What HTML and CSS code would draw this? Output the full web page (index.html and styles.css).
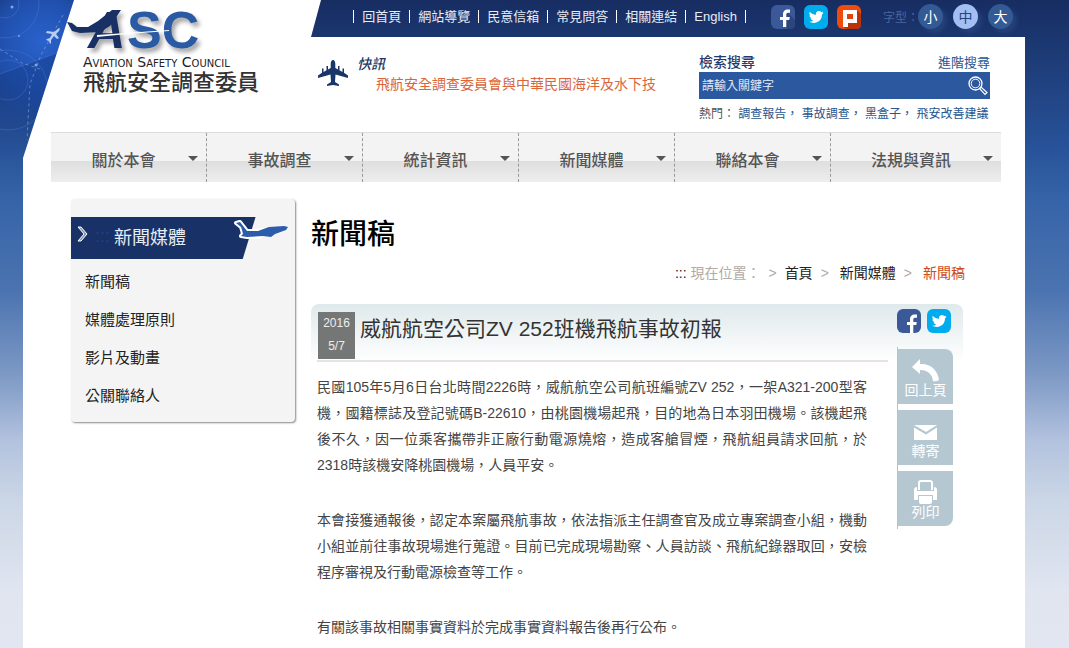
FILE: index.html
```html
<!DOCTYPE html>
<html lang="zh-Hant">
<head>
<meta charset="utf-8">
<meta name="viewport" content="width=device-width, initial-scale=1">
<title>飛航安全調查委員會 - 新聞稿</title>
<link rel="stylesheet" href="styles.css">
</head>
<body>
<svg class="radar" viewBox="0 0 74 160" aria-hidden="true">
  <defs>
    <radialGradient id="glow" gradientUnits="userSpaceOnUse" cx="42" cy="42" r="95">
      <stop offset="0" stop-color="#2a62cc"/><stop offset=".45" stop-color="#2050ae"/><stop offset="1" stop-color="#1d4695" stop-opacity="0"/>
    </radialGradient>
    <linearGradient id="shade" x1="0" y1="0" x2="0" y2="1">
      <stop offset="0" stop-color="#123a86" stop-opacity=".5"/><stop offset="1" stop-color="#123a86" stop-opacity="0"/>
    </linearGradient>
  </defs>
  <path d="M0 0H74L23 160H0z" fill="url(#glow)"/>
  <path d="M0 74 57 53 23 160H0z" fill="url(#shade)"/>
  <g fill="none" stroke="#5b8be0" stroke-width="1" opacity=".3">
    <circle cx="5" cy="4" r="34"/><circle cx="5" cy="4" r="14"/><circle cx="8" cy="90" r="40"/><circle cx="8" cy="80" r="20"/>
    <path d="M0 74 57 53"/>
  </g>
  <path d="M0 49 22 63 40 69M63 15 41 55 30 84 27 140" fill="none" stroke="#a9c4f2" stroke-width="1" stroke-dasharray="3 3" opacity=".45"/>
  <g fill="#7fa4e8"><circle cx="12" cy="7" r="1.5"/><circle cx="19" cy="36" r="1"/><circle cx="36" cy="65" r="1.5"/></g>
  <path d="M59 28c1 0 1 1 0 3l-3 3 3 4-2 1-3-3-3 4v3l-1 1-1-3-3-1 1-1 3-1 2-4-6-1 1-2 7 1z" fill="#b9cdf0"/>
</svg>
<div class="page">
  <header class="header">
    <div class="topbar">
      <nav class="utility" aria-label="網站工具">
        <a href="#">回首頁</a><a href="#">網站導覽</a><a href="#">民意信箱</a><a href="#">常見問答</a><a href="#">相關連結</a><a href="#">English</a>
      </nav>
      <div class="social">
        <a href="#" aria-label="Facebook"><svg class="badge" viewBox="0 0 24 24"><rect width="24" height="24" rx="6" fill="#3b5998"/><path d="M16 7 24 15V20Q24 24 20 24H17L13 20z" fill="#2c467e"/><path d="M12 22v-7H9v-3h3v-2.500C12 6 14 4.500 16.500 4.500H19v3.200h-1.800c-1.500 0-1.900.7-1.900 2V12h3.500l-.5 3h-3v7z" fill="#fff"/></svg></a>
        <a href="#" aria-label="Twitter"><svg class="badge" viewBox="0 0 24 24"><rect width="24" height="24" rx="6" fill="#00aced"/><path d="M19.500 7.500c-.6.3-1.100.4-1.700.5.600-.4 1-.9 1.300-1.600-.6.300-1.200.6-1.900.7a3 3 0 0 0-5.200 2.700C9.500 9.700 7.300 8.500 5.800 6.700c-.8 1.400-.4 3.100.9 4-.5 0-.9-.1-1.300-.4 0 1.500 1 2.700 2.400 3-.5.1-.9.1-1.300 0 .4 1.200 1.500 2 2.800 2.100-1.300 1-2.800 1.400-4.400 1.200 5.800 3.500 13.100.1 13.100-7 .6-.6 1.100-1.200 1.500-2.100z" fill="#fff"/></svg></a>
        <a href="#" aria-label="Plurk"><svg class="badge" viewBox="0 0 24 24"><rect width="24" height="24" rx="6" fill="#f04a0c"/><path d="M20 5 24 9V20Q24 24 20 24H10L6 22z" fill="#b93509"/><path d="M6 5H20V18H11V22H6z" fill="#fff"/><path d="M10 9H16V14H10z" fill="#e0440c"/></svg></a>
      </div>
      <div class="sizes" role="group" aria-label="字型">
        <span class="sizes-label">字型：</span>
        <button type="button" class="size">小</button>
        <button type="button" class="size size-on">中</button>
        <button type="button" class="size">大</button>
      </div>
    </div>
    <div class="masthead">
      <a class="brand" href="#">
        <svg class="logo" viewBox="0 0 150 51" role="img" aria-label="ASC">
          <path d="M2 18 7 19 12 23 23 23 33 17 47 6 56 6 45 22 35 28 15 29 7 27z" fill="#183064"/>
          <text x="23" y="44" class="logo-a">A</text>
          <text x="62" y="44" class="logo-sc">SC</text>
          <path d="M32 31 104 26 104 27 62 30 32 33z" fill="#fff"/>
        </svg>
        <span class="brand-en">Aviation Safety Council</span>
        <span class="brand-zh">飛航安全調查委員</span>
      </a>
      <section class="flash">
        <svg class="flash-plane" viewBox="0 0 30 26" aria-hidden="true"><path d="M15 0c1.500 0 2.300 2 2.300 4v4l2.700 1.500V6h1.500v4.300l3 1.600V8.500H26v4.300l4 2.700V18l-12.500-3.500L17 22l4 2.500V26l-6-1-6 1v-1.500L13 22l-.5-7.500L0 18v-2.500l4-2.700V8.500h1.500v3.400l3-1.600V6H10v3.500L12.700 8V4c0-2 .8-4 2.300-4z" fill="#1a3568"/></svg>
        <div>
          <h2 class="flash-title">快訊</h2>
          <a class="flash-link" href="#">飛航安全調查委員會與中華民國海洋及水下技</a>
        </div>
      </section>
      <form class="search">
        <div class="search-head"><label for="q">檢索搜尋</label><a href="#">進階搜尋</a></div>
        <div class="search-box">
          <input id="q" type="text" placeholder="請輸入關鍵字">
          <button type="button" aria-label="搜尋"><svg viewBox="0 0 20 20"><g fill="none" stroke="#fff"><circle cx="7.500" cy="7.500" r="6.500" stroke-width="1.300"/><circle cx="7.500" cy="7.500" r="4.300"/><path d="m11.500 12.500 1.500-1.500 6 5.500-2 2z" stroke-width="1.200"/></g></svg></button>
        </div>
        <p class="hot">熱門： <a href="#">調查報告，</a> <a href="#">事故調查，</a> <a href="#">黑盒子，</a> <a href="#">飛安改善建議</a></p>
      </form>
    </div>
  </header>
  <nav class="menu" aria-label="主選單">
    <a href="#"><span>關於本會</span></a>
    <a href="#"><span>事故調查</span></a>
    <a href="#"><span>統計資訊</span></a>
    <a href="#"><span>新聞媒體</span></a>
    <a href="#"><span>聯絡本會</span></a>
    <a href="#"><span>法規與資訊</span></a>
  </nav>
  <div class="content">
    <aside class="sidebar">
      <h2 class="side-title">
        <svg class="side-arrow" viewBox="0 0 12 18" aria-hidden="true"><path d="m1 2 3 0 6 7-6 7H1l6-7z" fill="#8997b5" stroke="#fff"/></svg>
        <span class="side-dots">:::</span>
        <span>新聞媒體</span>
        <svg class="side-plane" viewBox="0 0 56 24" aria-hidden="true"><path d="M3 4 7 3 14 12 25 12 30 11 26 18 14 18 8 17 10 15 9 11 8 8z" fill="#fff" stroke="#fff" stroke-width="4" stroke-linejoin="round"/><path d="M3 4 7 3 14 12 25 12 36 8 51 7 55 8 53 11 42 15 38 18 30 17 14 18 8 17 10 15 9 11 8 8z" fill="#2c5caa"/></svg>
      </h2>
      <ul class="side-list">
        <li><a href="#">新聞稿</a></li>
        <li><a href="#">媒體處理原則</a></li>
        <li><a href="#">影片及動畫</a></li>
        <li><a href="#">公關聯絡人</a></li>
      </ul>
    </aside>
    <main class="main">
      <h1>新聞稿</h1>
      <nav class="crumbs" aria-label="現在位置">
        <span><b>:::</b> 現在位置：</span><i>&gt;</i><a href="#">首頁</a><i>&gt;</i><a class="crumb-gap" href="#">新聞媒體</a><i>&gt;</i><a class="crumb-gap crumb-on" href="#">新聞稿</a>
      </nav>
      <div class="panel">
        <article class="article">
          <header class="article-head">
            <time datetime="2016-05-07"><span>2016</span><span>5/7</span></time>
            <h2>威航航空公司ZV 252班機飛航事故初報</h2>
          </header>
          <div class="article-body">
            <p>民國105年5月6日台北時間2226時，威航航空公司航班編號ZV 252，一架A321-200型客機，國籍標誌及登記號碼B-22610，由桃園機場起飛，目的地為日本羽田機場。該機起飛後不久，因一位乘客攜帶非正廠行動電源燒熔，造成客艙冒煙，飛航組員請求回航，於2318時該機安降桃園機場，人員平安。</p>
            <p>本會接獲通報後，認定本案屬飛航事故，依法指派主任調查官及成立專案調查小組，機動小組並前往事故現場進行蒐證。目前已完成現場勘察、人員訪談、飛航紀錄器取回，安檢程序審視及行動電源檢查等工作。</p>
            <p>有關該事故相關事實資料於完成事實資料報告後再行公布。</p>
          </div>
        </article>
        <aside class="tools">
          <div class="share">
            <a href="#" aria-label="分享至 Facebook"><svg class="badge" viewBox="0 0 24 24"><rect width="24" height="24" rx="6" fill="#3b5998"/><path d="M13 24v-8h-3v-3h3v-2.500C13 7 15 5.500 17.500 5.500H20v3.200h-1.800c-1.500 0-1.900.7-1.900 2V13h3.500l-.5 3h-3v8z" fill="#fff"/></svg></a>
            <a href="#" aria-label="分享至 Twitter"><svg class="badge" viewBox="0 0 24 24"><rect width="24" height="24" rx="6" fill="#00aced"/><path d="M19.500 7.500c-.6.3-1.100.4-1.700.5.600-.4 1-.9 1.300-1.600-.6.300-1.200.6-1.900.7a3 3 0 0 0-5.200 2.700C9.500 9.700 7.300 8.500 5.800 6.700c-.8 1.400-.4 3.100.9 4-.5 0-.9-.1-1.300-.4 0 1.500 1 2.700 2.400 3-.5.1-.9.1-1.300 0 .4 1.200 1.500 2 2.800 2.100-1.300 1-2.800 1.400-4.400 1.200 5.800 3.500 13.100.1 13.100-7 .6-.6 1.100-1.200 1.500-2.100z" fill="#fff"/></svg></a>
          </div>
          <div class="actions">
            <button type="button"><svg viewBox="0 0 30 24"><path d="M1 9 9 1V6C19 5 27 12 28 22Q25 24 22 23C21 16 17 12 9 12V16z" fill="#fff"/></svg>回上頁</button>
            <button type="button"><svg viewBox="0 0 30 24"><path d="M3 6H26L15 13zM3 8.500 15 15.500 26 8.500V21H3z" fill="#fff"/></svg>轉寄</button>
            <button type="button"><svg viewBox="0 0 30 24"><path d="M8 10V3Q8 1 10 1H19Q21 1 21 3V10" fill="none" stroke="#fff" stroke-width="2"/><path d="M3 10Q3 7 6 7V11H23V7Q26 7 26 10V20H22V15H7V20H3z" fill="#fff"/><path d="M8 16H21V22Q21 24 19 24H10Q8 24 8 22z" fill="#fff"/></svg>列印</button>
          </div>
        </aside>
      </div>
    </main>
  </div>
</div>
</body>
</html>
```
FILE: styles.css
```css
* { box-sizing: border-box; }

body {
  margin: 0;
  min-height: 100vh;
  padding: 0 44px 0 23px;
  background: linear-gradient(#172d62 0, #1b366f 37px, #28539a 150px, #3664a8 200px, #4b73b0 290px, #7d99c5 375px, #b2c2de 440px, #cbd6e6 500px, #e0e5f0 590px, #e2e6f1 650px) #e2e6f1;
  font-family: "Liberation Sans", "Noto Sans CJK TC", sans-serif;
  font-size: 14px;
  color: #444;
}

a { color: inherit; text-decoration: none; }
h1, h2, p, ul { margin: 0; padding: 0; }
button { border: 0; padding: 0; font: inherit; color: inherit; background: none; cursor: pointer; }

.radar { position: absolute; left: 0; top: 0; width: 74px; height: 160px; }

.page { position: relative; min-height: 100vh; }
.page::before {
  content: "";
  position: absolute;
  inset: 0;
  background: #fff;
  clip-path: polygon(51px 0, 298px 0, 288px 37px, 100% 37px, 100% 100%, 0 100%, 0 158px);
}
.header, .menu, .content { position: relative; }

.topbar {
  display: flex;
  justify-content: flex-end;
  align-items: center;
  height: 37px;
  padding: 0 12px 4px 0;
  font-size: 13px;
  color: #e8ecf5;
}
.utility { display: flex; line-height: 13px; border-left: 1px solid #fff; }
.utility a { padding: 0 8px; border-right: 1px solid #fff; }
.social { display: flex; gap: 9px; margin-left: 25px; }
.badge { display: block; width: 24px; height: 24px; }
.sizes { display: flex; align-items: center; gap: 10px; margin-left: 22px; }
.sizes-label { margin-right: -11px; font-size: 12px; color: #4a659f; }
.size {
  width: 25px;
  height: 25px;
  border-radius: 50%;
  background: #335a95;
  color: #fff;
  font-size: 14px;
  line-height: 24px;
  box-shadow: 4px 4px 4px #24417a;
}
.size-on { background: #a3bef2; color: #24437d; }

.masthead {
  display: grid;
  grid-template-columns: 295px 1fr 291px;
  height: 95px;
  padding-right: 35px;
}
.brand { display: flex; flex-direction: column; margin-top: -33px; padding-left: 42px; }
.logo { width: 150px; height: 51px; flex: none; overflow: visible; filter: drop-shadow(3px 4px 2px rgba(0, 0, 0, .35)); }
.logo-a, .logo-sc { font: bold 52px "Liberation Sans", sans-serif; fill: #2b5aa5; }
.logo-a { font-style: italic; fill: #183064; }
.brand-en { margin-left: 18px; font: small-caps 14px/15px "DejaVu Sans", sans-serif; color: #222; }
.brand-zh { margin: 1px 0 0 18px; font-size: 22px; line-height: 23px; font-weight: 500; color: #333; }

.flash { display: flex; gap: 9px; padding-top: 17px; }
.flash-plane { width: 30px; height: 26px; margin-top: 6px; flex: none; }
.flash-title { font-size: 14px; line-height: 20px; font-weight: 500; font-style: italic; color: #1a3568; }
.flash-link { display: block; margin-left: 19px; line-height: 20px; white-space: nowrap; color: #d9663c; }

.search { padding-top: 16px; color: #28568f; }
.search-head { display: flex; justify-content: space-between; height: 19px; line-height: 19px; font-size: 13px; }
.search-head label { font-size: 14px; font-weight: 500; color: #1f3a70; }
.search-box { display: flex; align-items: center; height: 27px; background: #2b589e; }
.search-box input { flex: 1; min-width: 0; border: 0; padding: 0 3px; background: none; color: #fff; font: inherit; font-size: 12px; }
.search-box input::placeholder { color: #e2e9f5; }
.search-box svg { display: block; width: 20px; height: 20px; margin-right: 2px; }
.hot { padding-top: 6px; font-size: 12px; line-height: 18px; white-space: nowrap; color: #555; }
.hot a { color: #28568f; }

.menu {
  display: grid;
  grid-template-columns: repeat(5, 156fr) 170fr;
  margin: 0 24px 0 28px;
  height: 50px;
  border-top: 1px solid #ddd;
  background: linear-gradient(#f3f3f3 0 28px, #dedede 28px, #eee);
}
.menu a {
  display: flex;
  align-items: center;
  padding: 2px 8px 0;
  border-right: 1px dashed #999;
  font-size: 16px;
  font-weight: 500;
  color: #555;
}
.menu a:last-child { border-right: 0; }
.menu span { flex: 1; text-align: center; }
.menu a::after { content: ""; border: 5px solid transparent; border-top-color: #555; border-bottom: 0; }

.content { display: flex; align-items: flex-start; padding: 17px 62px 0 48px; }
.sidebar {
  flex: 0 0 224px;
  padding: 18px 0 3px;
  border-radius: 4px;
  background: #f4f4f4;
  box-shadow: 1px 1px 2px #888;
}
.side-title {
  position: relative;
  display: flex;
  align-items: center;
  height: 42px;
  padding: 0 0 4px 6px;
  background: linear-gradient(107deg, #183167 0 176px, transparent 177px);
  font-size: 18px;
  font-weight: 400;
  color: #e8ecf5;
}
.side-arrow { width: 12px; height: 18px; margin-bottom: 5px; }
.side-dots { width: 25px; padding-left: 6px; color: #1d4286; }
.side-plane { position: absolute; right: 6px; top: 2px; width: 56px; height: 24px; }
.side-list { list-style: none; padding: 4px 14px; font-size: 15px; line-height: 38px; color: #222; }

.main { flex: 1; min-width: 0; margin-left: 16px; }
h1 { padding-top: 16px; font-size: 28px; line-height: 40px; font-weight: 500; color: #000; }
.crumbs { display: flex; justify-content: flex-end; margin-right: -2px; padding-top: 8px; line-height: 20px; color: #222; }
.crumbs span, .crumbs i { color: #b3aaa6; font-style: normal; }
.crumbs b { font-weight: 400; color: #222; }
.crumbs i { margin: 0 8px; }
.crumb-gap { margin-left: 3px; }
.crumbs .crumb-on { color: #cf4a1d; }

.panel {
  display: flex;
  margin-top: 21px;
  padding: 8px 10px 0 6px;
  border-radius: 8px 8px 0 0;
  background: linear-gradient(#dfe9eb, #fff 58px);
}
.article { flex: 1; min-width: 0; }
.article-head { display: flex; padding: 0 0 1px 1px; border-bottom: 2px solid #e4e4e4; }
time { display: flex; flex-direction: column; width: 37px; background: #757777; color: #eee; font-size: 12px; line-height: 23px; padding-bottom: 1px; text-align: center; }
.article-head h2 { margin-left: 5px; font-size: 21px; line-height: 33px; font-weight: 400; color: #333; }
.article-body { padding: 12px 21px 0 0; line-height: 26px; text-align: justify; }
.article-body p + p { margin-top: 29px; }

.tools { flex: 0 0 56px; margin-left: 9px; }
.share { display: flex; gap: 6px; margin-top: -3px; }
.actions { display: grid; gap: 6px; margin-top: 14px; padding: 2px 0 3px; border-left: 1px solid #b5c4cb; color: #fff; }
.actions button { height: 55px; background: #b5c7d1; font-size: 14px; line-height: 17px; font-weight: 400; }
.actions button:first-child { border-radius: 0 8px 0 0; }
.actions button:last-child { border-radius: 0 0 8px 0; }
.actions svg { display: block; width: 30px; height: 24px; margin: 4px auto 0; }
```
